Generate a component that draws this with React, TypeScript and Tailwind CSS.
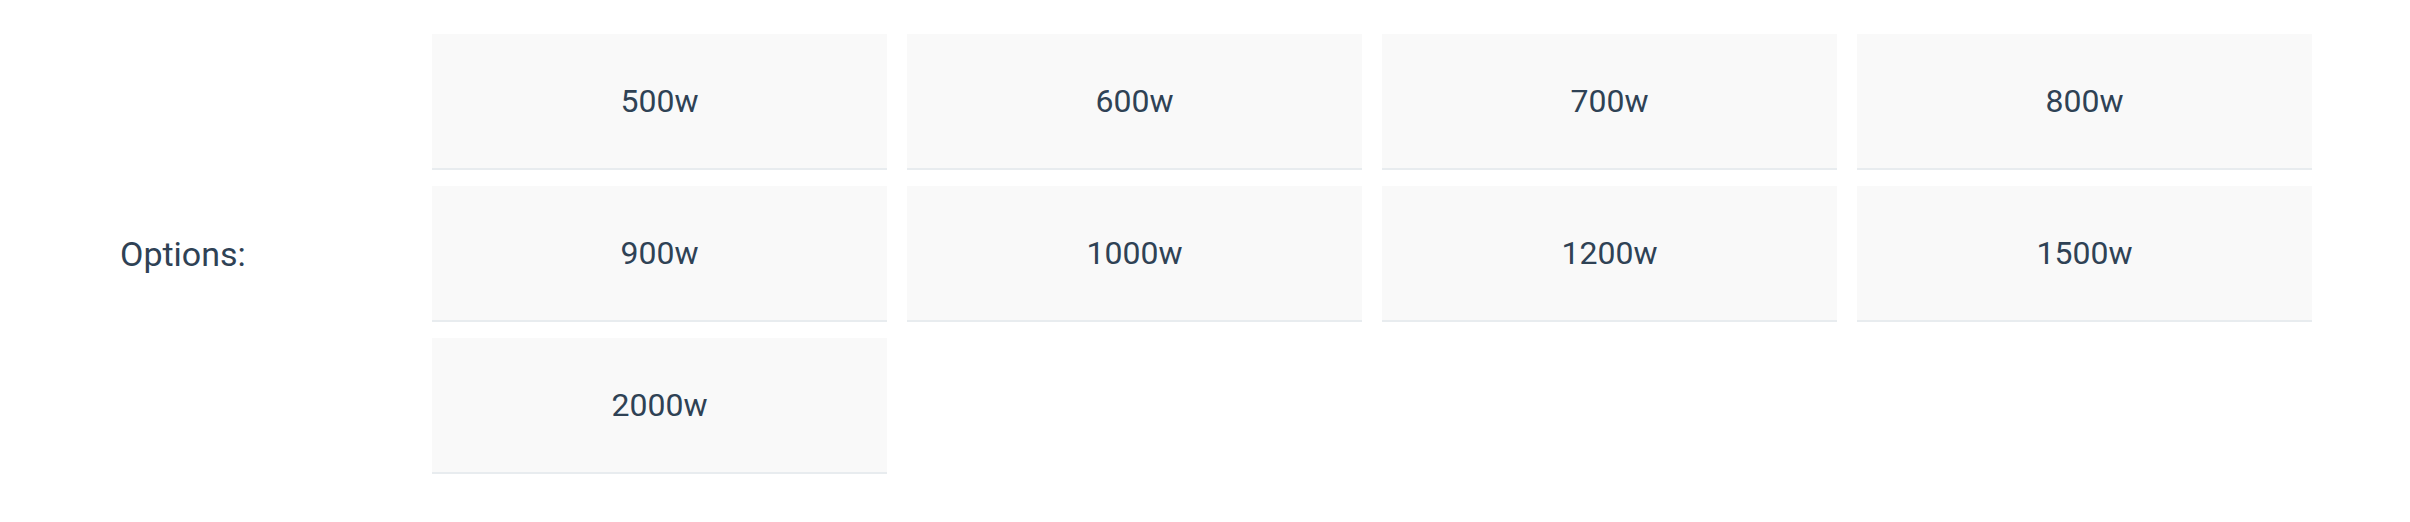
const OPTIONS = ["500w", "600w", "700w", "800w", "900w", "1000w", "1200w", "1500w", "2000w"];

export default function App() {
  return (
    <div className="flex items-center bg-white pt-[34px] pb-[48px] font-['Roboto',sans-serif] text-[#2f4255]">
      {/* Label column */}
      <div className="w-[432px] shrink-0 pl-[120px] text-[34px] leading-none">Options:</div>

      {/* Options grid */}
      <div className="grid w-[1880px] grid-cols-4 gap-x-5 gap-y-4">
        {OPTIONS.map((o) => (
          <div
            key={o}
            className="flex h-[136px] items-center justify-center border-b-2 border-[#e8ecef] bg-[#f9f9f9] text-[32px]"
          >
            {o}
          </div>
        ))}
      </div>
    </div>
  );
}
